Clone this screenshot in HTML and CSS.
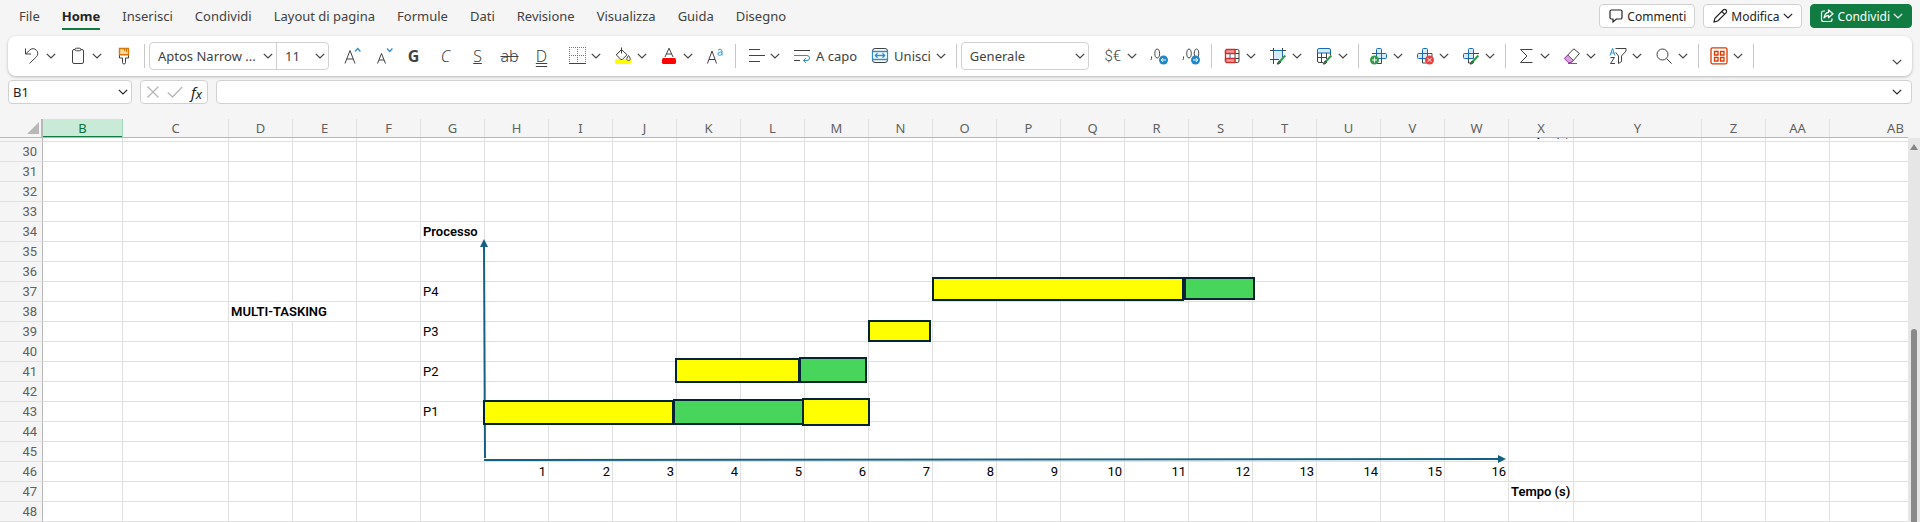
FILE: index.html
```html
<!DOCTYPE html>
<html lang="it">
<head>
<meta charset="utf-8">
<title>Foglio di calcolo</title>
<link rel="stylesheet" href="styles.css">
</head>
<body>
<svg class="defs" aria-hidden="true">
  <symbol id="chev" viewBox="0 0 10 10"><path d="M.8 2.800 5 7l4.200-4.200" fill="none" stroke="currentColor" stroke-width="1.200"/></symbol>
  <symbol id="brush" viewBox="0 0 18 18"><path d="M16.300 8.500 10 15.500" fill="none" stroke="#2f9e4a" stroke-width="2"/><path d="M8 17c1.500 0 3.300-.2 3.600-2-.6-1.200-2-1-2.400 0-.2.800-.5 1.400-1.200 2z" fill="#2f9e4a"/></symbol>
</svg>

<header class="top">
  <nav class="tabs">
    <a href="#">File</a>
    <a href="#" class="active" aria-current="page">Home</a>
    <a href="#">Inserisci</a>
    <a href="#">Condividi</a>
    <a href="#">Layout di pagina</a>
    <a href="#">Formule</a>
    <a href="#">Dati</a>
    <a href="#">Revisione</a>
    <a href="#">Visualizza</a>
    <a href="#">Guida</a>
    <a href="#">Disegno</a>
  </nav>
  <div class="actions">
    <button class="action" type="button"><svg width="16" height="16" viewBox="0 0 16 16" fill="none" stroke="currentColor" stroke-width="1.200"><path d="M3.500 2h9A1.500 1.500 0 0 1 14 3.500v6a1.500 1.500 0 0 1-1.500 1.500H8.300L5 14v-3H3.500A1.500 1.500 0 0 1 2 9.500v-6A1.500 1.500 0 0 1 3.500 2z"/></svg>Commenti</button>
    <button class="action" type="button"><svg width="16" height="16" viewBox="0 0 16 16" fill="none" stroke="currentColor" stroke-width="1.200"><path d="m2 14 .9-3.800 8.300-8.200a1.900 1.900 0 0 1 2.800 2.800L5.800 13 2 14zM9.800 3.500l2.700 2.700"/></svg>Modifica<svg class="chev"><use href="#chev"/></svg></button>
    <button class="action share" type="button"><svg width="16" height="16" viewBox="0 0 16 16" fill="none" stroke="currentColor" stroke-width="1.200"><path d="M6 3H4.500A2 2 0 0 0 2.500 5v6.500a2 2 0 0 0 2 2H11a2 2 0 0 0 2-2V10.500"/><path d="M9.500 2v2.300C6.800 4.600 5.500 6.500 5 10c1.300-1.900 2.600-2.600 4.500-2.700V9.800L14 5.800z" stroke-linejoin="round"/></svg>Condividi<svg class="chev"><use href="#chev"/></svg></button>
  </div>
</header>

<div class="ribbon" role="toolbar" aria-label="Barra multifunzione">
  <button class="tool" type="button" aria-label="Annulla"><svg class="ic" viewBox="0 0 18 18"><path d="M2.500 1.500V7H8M2.800 6.800 6.600 3.200a4.600 4.600 0 0 1 6.800 0 4.600 4.600 0 0 1 0 6.600L6.500 16.500"/></svg><svg class="chev"><use href="#chev"/></svg></button>
  <button class="tool" type="button" aria-label="Incolla"><svg class="ic" viewBox="0 0 18 18"><rect x="3.500" y="2.500" width="11" height="14" rx="1.500"/><rect x="6" y="1.200" width="6" height="2.600" rx="1.300" fill="#fff"/></svg><svg class="chev"><use href="#chev"/></svg></button>
  <button class="tool" type="button" aria-label="Copia formato"><svg class="ic" viewBox="0 0 18 18"><path d="M4.500 7.500V11H7.500v4.500a1.500 1.500 0 0 0 3 0V11h3V7.500"/><path d="M4.500 1.500h9v6.200h-9z" fill="#fbd9a0" stroke="#d97706" stroke-width="1.400"/><path d="M9.500 1.500v2.500M11.500 1.500v3.500" stroke="#d97706"/></svg></button>
  <span class="sep"></span>
  <div class="fontbox">
    <select class="font-name" aria-label="Tipo di carattere"><option>Aptos Narrow ...</option></select>
    <select class="font-size" aria-label="Dimensione carattere"><option>11</option></select>
  </div>
  <button class="tool" type="button" aria-label="Aumenta carattere"><svg class="ic" viewBox="0 0 18 18"><path d="m1 16.500 5-13 5 13M2.700 12h6.600"/><path d="m11 4.500 2.700-3 2.700 3" stroke="#2b8fd0" stroke-width="1.300"/></svg></button>
  <button class="tool" type="button" aria-label="Riduci carattere"><svg class="ic" viewBox="0 0 18 18"><path d="m1.500 16.500 4-10 4 10M3 13h5"/><path d="m11 1.500 2.700 3 2.700-3" stroke="#2b8fd0" stroke-width="1.300"/></svg></button>
  <button class="tool letter bold" type="button" aria-label="Grassetto">G</button>
  <button class="tool letter italic" type="button" aria-label="Corsivo">C</button>
  <button class="tool letter under" type="button" aria-label="Sottolineato">S</button>
  <button class="tool letter strike" type="button" aria-label="Barrato">ab</button>
  <button class="tool letter dunder" type="button" aria-label="Doppia sottolineatura">D</button>
  <button class="tool" type="button" aria-label="Bordi"><svg class="ic" viewBox="0 0 18 18"><path d="M1.500 15V.5M9.500 15V.5M17.500 15V.5M1 .5h17M1 8.500h17" stroke="#777" stroke-dasharray="1 1"/><path d="M1 16.500h17"/></svg><svg class="chev"><use href="#chev"/></svg></button>
  <button class="tool" type="button" aria-label="Colore riempimento"><svg class="ic" viewBox="0 0 18 18"><rect x="1" y="12" width="16" height="5" rx="1.500" fill="#ff0" stroke="none"/><path d="m7.500 2.500-5.200 5.300 4.500 4.700h1.500l4.700-4.700-5.500-5.300zM7.500.5v6M2.300 7.800l2-2"/><path d="M14.500 8.500c-3 4 -1.500 5 0 5s3-1 0-5z" fill="#fff"/></svg><svg class="chev"><use href="#chev"/></svg></button>
  <button class="tool" type="button" aria-label="Colore carattere"><svg class="ic" viewBox="0 0 18 18"><rect x="2" y="11" width="14" height="6" rx="1.500" fill="#f00" stroke="none"/><path d="m5 10 4-8.800L13 10M6.500 7h5"/></svg><svg class="chev"><use href="#chev"/></svg></button>
  <button class="tool" type="button" aria-label="Maiuscole e minuscole"><svg class="ic" viewBox="0 0 18 18"><path d="M1.500 16.500 6 4l4.500 12.500M3 12.500h6"/><path d="M12 3.200c1-1.500 4-1.200 4 1V8.500M16 5c-2.500 0-4 .4-4 1.900 0 2 3.200 1.800 4-.2" stroke="#2b8fd0"/></svg></button>
  <span class="sep"></span>
  <button class="tool" type="button" aria-label="Allineamento"><svg class="ic" viewBox="0 0 18 18"><path d="M2 2.500h11M2 8.500h16M2 14.500h11"/></svg><svg class="chev"><use href="#chev"/></svg></button>
  <button class="tool" type="button"><svg class="ic" viewBox="0 0 18 18"><path d="M1 3.500h16M1 13.500h6"/><path d="M1 8.500h13a2.500 2.500 0 0 1 0 5h-3.500M13 11l-2.500 2.500L13 16" stroke="#2b8fd0"/></svg>A capo</button>
  <button class="tool" type="button"><svg class="ic" viewBox="0 0 18 18"><rect x="1.500" y="1.500" width="15" height="14" rx="2.500"/><path d="M1.500 4.500h15v8h-15zM4.500 8.500h9M6.500 6.200 4.300 8.500l2.200 2.300M11.500 6.200l2.200 2.300-2.200 2.300" stroke="#2b8fd0" stroke-width="1.300"/></svg>Unisci<svg class="chev"><use href="#chev"/></svg></button>
  <span class="sep"></span>
  <select class="format" aria-label="Formato numero"><option>Generale</option></select>
  <button class="tool" type="button" aria-label="Formato valuta"><span class="money">$€</span><svg class="chev"><use href="#chev"/></svg></button>
  <button class="tool" type="button" aria-label="Aumenta decimali"><svg class="ic" viewBox="0 0 18 18"><path d="M1.500 9.500v2L.8 13M7.200 2c3.200 0 3.200 9 0 9s-3.200-9 0-9z"/><circle cx="13.500" cy="13" r="4.500" fill="#1f86cc" stroke="none"/><path d="M16 13h-4.500M13.200 11l-2 2 2 2" stroke="#fff"/></svg></button>
  <button class="tool" type="button" aria-label="Riduci decimali"><svg class="ic" viewBox="0 0 18 18"><path d="M1.500 9.500v2L.8 13M7 2c3 0 3 9 0 9s-3-9 0-9zM14.500 2c3 0 3 9 0 9s-3-9 0-9z"/><circle cx="13.500" cy="13" r="4.500" fill="#1f86cc" stroke="none"/><path d="M11 13h4.500M13.800 11l2 2-2 2" stroke="#fff"/></svg></button>
  <span class="sep"></span>
  <button class="tool" type="button" aria-label="Formattazione condizionale"><svg class="ic" viewBox="0 0 18 18"><path d="M12 2.500h2.500A1.500 1.500 0 0 1 16 4v10a1.500 1.500 0 0 1-1.500 1.500H12M12 2.500v13M7 6.500h9M7 11.500h9"/><path d="M7 6.500v5" stroke="#1769b5"/><path d="M3.500 2.500H12v4H2.500v-3zM2.500 11.500H12v4H3.500l-1-1z" fill="#fb9aa0" stroke="#d0302b" stroke-width="1.300"/><path d="M2.500 3.500v11" stroke="#d0302b" stroke-width="1.300"/></svg><svg class="chev"><use href="#chev"/></svg></button>
  <button class="tool" type="button" aria-label="Formatta come tabella"><svg class="ic" viewBox="0 0 18 18"><path d="M4.500 3.500h9v9h-9z" fill="#d6eafa" stroke="none"/><path d="M4.500 1v16M1 12.500h8"/><path d="M13.500 1v9M1 3.500h16M4.500 3.500v9H10"/><path d="M4.500 3.500h9v6M4.500 3.500v9" stroke="#1769b5"/><use href="#brush" width="18" height="18"/></svg><svg class="chev"><use href="#chev"/></svg></button>
  <button class="tool" type="button" aria-label="Stili cella"><svg class="ic" viewBox="0 0 18 18"><path d="M2.500 6v8a1.500 1.500 0 0 0 1.500 1.500h4M6.500 6v9.500M11.500 6v6M2.500 10.500h9M15.500 6v2"/><path d="M4 1.500h10a1.500 1.500 0 0 1 1.500 1.500v3h-13V3A1.500 1.500 0 0 1 4 1.500z" fill="#d6eafa" stroke="#1769b5"/><use href="#brush" width="18" height="18"/></svg><svg class="chev"><use href="#chev"/></svg></button>
  <span class="sep"></span>
  <button class="tool" type="button" aria-label="Inserisci celle"><svg class="ic" viewBox="0 0 18 18"><path d="M2 6.500h4M6.500 12v4.500h5V12"/><path d="M6.500 2.500a1 1 0 0 1 1-1h3a1 1 0 0 1 1 1v4h4a1 1 0 0 1 1 1v3a1 1 0 0 1-1 1h-9z" fill="#d6eafa" stroke="#1769b5"/><path d="M6.500 6.500h5v5" stroke="#1769b5"/><circle cx="4.500" cy="13" r="4.500" fill="#2f9e4a" stroke="none"/><path d="M2 13h5M4.500 10.500v5" stroke="#fff"/></svg><svg class="chev"><use href="#chev"/></svg></button>
  <button class="tool" type="button" aria-label="Elimina celle"><svg class="ic" viewBox="0 0 18 18"><path d="M12 6.500h4v4M6.500 11.500v4.500h4"/><path d="M6.500 2.500a1 1 0 0 1 1-1h3a1 1 0 0 1 1 1v9h-9a1 1 0 0 1-1-1v-3a1 1 0 0 1 1-1h4z" fill="#d6eafa" stroke="#1769b5"/><path d="M6.500 6.500h9M6.500 6.500v5" stroke="#1769b5"/><circle cx="13.500" cy="13" r="4.500" fill="#e5403f" stroke="none"/><path d="m11.700 11.200 3.600 3.600M15.300 11.200l-3.600 3.600" stroke="#fff"/></svg><svg class="chev"><use href="#chev"/></svg></button>
  <button class="tool" type="button" aria-label="Formato celle"><svg class="ic" viewBox="0 0 18 18"><path d="M12 6.500h5M6.500 11.500v4.500h3"/><path d="M6.500 2.500a1 1 0 0 1 1-1h3a1 1 0 0 1 1 1v9h-9a1 1 0 0 1-1-1v-3a1 1 0 0 1 1-1h4z" fill="#d6eafa" stroke="#1769b5"/><path d="M6.500 6.500h5M6.500 6.500v5" stroke="#1769b5"/><use href="#brush" width="18" height="18"/></svg><svg class="chev"><use href="#chev"/></svg></button>
  <span class="sep"></span>
  <button class="tool" type="button" aria-label="Somma automatica"><svg class="ic" viewBox="0 0 18 18"><path d="M15.500 2.500h-12L10 9l-6.500 6.500h12"/></svg><svg class="chev"><use href="#chev"/></svg></button>
  <button class="tool" type="button" aria-label="Cancella"><svg class="ic" viewBox="0 0 18 18"><path d="m10.800 1.800 5.600 4.700-7.400 8.500H5.500L1.800 11z"/><path d="m5 8 5.200 5.200-2 2.300H5.300L1.500 11.700z" fill="#dca0e0" stroke="#9b3fa8"/><path d="M5 16.500h9" stroke="#9b3fa8"/></svg><svg class="chev"><use href="#chev"/></svg></button>
  <button class="tool" type="button" aria-label="Ordina e filtra"><svg class="ic" viewBox="0 0 18 18"><path d="M1 8.500 3.500 1.500 6 8.500M2 6h3" stroke="#2b8fd0"/><path d="M1.500 10.500h4l-4 6h4.500"/><path d="M6.500 1.500H17v2.500l-4.500 5v5.500l-3 2V9L6.800 5.500"/></svg><svg class="chev"><use href="#chev"/></svg></button>
  <button class="tool" type="button" aria-label="Trova e seleziona"><svg class="ic" viewBox="0 0 18 18"><circle cx="7.500" cy="7.500" r="5.500"/><path d="m11.500 11.500 5 5"/></svg><svg class="chev"><use href="#chev"/></svg></button>
  <span class="sep"></span>
  <button class="tool" type="button" aria-label="Componenti aggiuntivi"><svg class="ic addin" viewBox="0 0 18 18"><rect x="1" y=".8" width="16" height="16" rx="1.500"/><path d="M4.500 4.500h3.500V8H4.500zM10.500 4.500H14V8h-3.500zM4.500 10.500h3.500V14H4.500zM10.500 10.500H14V14h-3.500z"/></svg><svg class="chev"><use href="#chev"/></svg></button>
  <span class="sep"></span>
  <button class="tool more" type="button" aria-label="Opzioni barra"><svg class="chev"><use href="#chev"/></svg></button>
</div>

<div class="formula-row">
  <div class="field name-box">
    <input type="text" value="B1" aria-label="Casella del nome">
    <button type="button" aria-label="Elenco nomi"><svg class="chev"><use href="#chev"/></svg></button>
  </div>
  <div class="field fx">
    <button type="button" aria-label="Annulla modifica"><svg width="14" height="14" viewBox="0 0 14 14"><path d="m1.500 1.500 11 11M12.500 1.500l-11 11" stroke="#b8b8b8" stroke-width="1.400" fill="none"/></svg></button>
    <button type="button" aria-label="Conferma"><svg width="16" height="14" viewBox="0 0 16 14"><path d="M.8 7.500 5.500 12 15.200 2" stroke="#b8b8b8" stroke-width="1.400" fill="none"/></svg></button>
    <button type="button" class="fn" aria-label="Inserisci funzione">f<small>x</small></button>
  </div>
  <div class="field formula">
    <input type="text" value="" aria-label="Barra della formula">
    <button type="button" aria-label="Espandi"><svg class="chev"><use href="#chev"/></svg></button>
  </div>
</div>

<main class="sheet">
  <div class="columns"><table class="grid head" id="head" aria-label="Colonne"></table></div>
  <div class="pane">
    <div class="cells">
      <div class="canvas">
        <table class="grid" id="body" aria-label="Foglio"></table>
        <svg class="chart" width="1077" height="300" viewBox="480 222 1077 300" role="img" aria-label="Diagramma multi-tasking">
          <g stroke="#156082" stroke-width="2"><path d="M484 246 485 458"/><path d="M484 460 1500 459"/></g>
          <path d="M484 239l4 8h-8zM1506 459l-8-4v8z" fill="#156082"/>
          <g stroke="#042433" stroke-width="2">
            <rect x="1185" y="278" width="69" height="21" fill="#47d65b"/>
            <rect x="933" y="278" width="250" height="22" fill="#ff0"/>
            <rect x="869" y="321" width="61" height="20" fill="#ff0"/>
            <rect x="676" y="359" width="123" height="23" fill="#ff0"/>
            <rect x="800" y="358" width="66" height="24" fill="#47d65b"/>
            <rect x="484" y="401" width="189" height="23" fill="#ff0"/>
            <rect x="674" y="400" width="129" height="24" fill="#47d65b"/>
            <rect x="803" y="399" width="66" height="26" fill="#ff0"/>
          </g>
        </svg>
      </div>
    </div>
    <div class="scrollbar"><svg width="8" height="6" viewBox="0 0 8 6"><path d="M4 0 8 6H0z" fill="#858585"/></svg><span class="thumb"></span></div>
  </div>
</main>
<script src="sheet.js"></script>
</body>
</html>
```

FILE: styles.css
```css
* { box-sizing: border-box; }
body {
  margin: 0;
  height: 100vh;
  display: flex;
  flex-direction: column;
  overflow: hidden;
  background: #f5f5f5;
  color: #242424;
  font-family: "Noto Sans", "Open Sans", sans-serif;
  font-size: 13px;
}
button, input, select { font: inherit; color: inherit; margin: 0; }
button { background: none; border: 0; padding: 0; }
.defs { display: none; }
.chev { width: 10px; height: 10px; flex: none; }

.top {
  display: flex;
  justify-content: space-between;
  align-items: flex-start;
  height: 36px;
  flex: none;
  padding: 4px 8px 0 19px;
}
.tabs { display: flex; gap: 22px; }
.tabs a {
  color: #424242;
  text-decoration: none;
  line-height: 24px;
  height: 26px;
  white-space: nowrap;
}
.tabs .active { color: #242424; font-weight: 700; border-bottom: 2px solid #107c41; }
.actions { display: flex; gap: 8px; }
.action {
  display: flex;
  align-items: center;
  gap: 3px;
  height: 24px;
  padding: 0 8px;
  font-size: 12px;
  background: #fff;
  border: 1px solid #d1d1d1;
  border-radius: 4px;
}
.share { background: #107c41; border-color: #107c41; color: #fff; }

.ribbon {
  display: flex;
  align-items: center;
  height: 40px;
  flex: none;
  margin: 0 8px;
  padding-left: 8px;
  background: #fff;
  border-radius: 8px;
  box-shadow: 0 1px 3px rgba(0, 0, 0, .25);
  color: #424242;
}
.tool {
  display: flex;
  align-items: center;
  gap: 5px;
  height: 32px;
  padding: 0 6px 0 7px;
  flex: none;
  white-space: nowrap;
}
.tool:not(:has(.chev)) { padding-right: 7px; }
.ic { width: 18px; height: 18px; fill: none; stroke: #424242; stroke-width: 1; }
.addin { stroke: #d83b01; stroke-width: 1.3; }
.letter { width: 32px; justify-content: center; padding: 0; font-size: 16px; font-weight: 300; line-height: 20px; }
.bold { font-weight: 700; }
.italic { font-style: italic; }
.under { text-decoration: underline; }
.strike { text-decoration: line-through; }
.dunder { text-decoration: underline double; }
.money { width: 18px; font-family: Roboto, sans-serif; font-size: 15px; font-weight: 300; }
.sep { width: 1px; height: 24px; margin: 0 4px; background: #c8c8c8; flex: none; }
.fontbox { display: flex; height: 28px; margin-right: 8px; border: 1px solid #d1d1d1; border-radius: 4px; }
select {
  appearance: none;
  border: 0;
  padding: 0 20px 0 8px;
  background: url("data:image/svg+xml,%3Csvg xmlns='http://www.w3.org/2000/svg' width='10' height='10'%3E%3Cpath d='M.8 2.800 5 7l4.200-4.200' fill='none' stroke='%23424242' stroke-width='1.200'/%3E%3C/svg%3E") no-repeat right 3px center;
}
.font-name { width: 127px; border-right: 1px solid #d1d1d1; }
.font-size { width: 51px; }
.format { width: 128px; height: 28px; margin-right: 8px; border: 1px solid #d1d1d1; border-radius: 4px; }
.more { margin-left: auto; padding: 12px 10px 0 0; }

.formula-row { display: flex; gap: 8px; padding: 4px 8px; flex: none; }
.field {
  display: flex;
  align-items: center;
  height: 24px;
  background: #fff;
  border: 1px solid #d1d1d1;
  border-radius: 4px;
}
.field input { flex: 1; min-width: 0; height: 20px; border: 0; background: none; padding: 0 4px; font-size: 13px; }
.field button { display: flex; align-items: center; }
.name-box { width: 124px; padding-right: 3px; }
.fx { width: 68px; justify-content: space-between; padding: 0 5px; }
.fx .fn { font-style: italic; font-size: 15px; line-height: 20px; }
.fn small { font-size: 13px; padding-top: 4px; }
.formula { flex: 1; padding-right: 9px; }

.sheet { flex: 1; min-height: 0; display: flex; flex-direction: column; overflow: hidden; }
.columns { flex: none; overflow: hidden; margin-right: 12px; border-bottom: 1px solid #b8b8b8; }
.grid { table-layout: fixed; border-collapse: separate; border-spacing: 0; width: 1962px; }
.grid th { padding: 0; font-weight: 400; color: #616161; }
.head th { height: 18px; line-height: 18px; border-right: 1px solid #e0e0e0; }
.head tr { height: 18px; }
.head { border-top: 11px solid #f5f5f5; }
.head .corner { text-align: right; border-right: 2px solid #b8b8b8; box-shadow: 0 -11px 0 #f5f5f5, 0 -11px 0 #b8b8b8; }
.corner svg { display: block; margin-left: auto; margin-right: 2px; }
.head .selected { background: #caead8; color: #0e703a; border-right-color: #a0d8b9; box-shadow: inset 0 -1px 0 #107c41, 0 1px 0 #107c41; }
.pane { flex: 1; min-height: 0; display: flex; }
.cells { flex: 1; min-width: 0; overflow: hidden; background: #fff; }
.canvas { position: relative; width: 1962px; margin-top: -16px; }
#body tr { height: 20px; }
#body th {
  font-family: Roboto, sans-serif;
  background: #f5f5f5;
  text-align: right;
  line-height: 18px;
  padding: 1px 5px 0 0;
  border-right: 1px solid #b8b8b8;
  border-bottom: 1px solid #e0e0e0;
}
#body td {
  height: 20px;
  padding: 1px 2px 0;
  line-height: 18px;
  color: #000;
  font-family: Roboto, sans-serif;
  white-space: nowrap;
  border-right: 1px solid #e0e0e0;
  border-bottom: 1px solid #e0e0e0;
}
#body .num { text-align: right; }
#body .strong { font-weight: 600; }
.chart { position: absolute; left: 480px; top: 100px; }
.scrollbar { width: 12px; display: flex; flex-direction: column; align-items: center; background: #e6e6e6; padding-top: 6px; }
.thumb { width: 6px; flex: 1; margin-top: 179px; border-radius: 3px 3px 0 0; background: #8a8a8a; }
```

FILE: sheet.js
```js
const columns = [["B", 80], ["C", 106]];
for (const name of "DEFGHIJKLMNOPQRSTUVW") columns.push([name, 64]);
columns.push(["X", 65], ["Y", 128], ["Z", 64], ["AA", 64], ["AB", 132]);

const cells = {
  G34: "Processo", G37: "P4", G39: "P3", G41: "P2", G43: "P1",
  D38: "MULTI-TASKING", X29: "Tempo (s)", X47: "Tempo (s)"
};
const strong = ["G34", "D38", "X29", "X47"];
[..."HIJKLMNOPQRSTUVW"].forEach((name, i) => { cells[name + 46] = i + 1; });

const colgroup = "<colgroup><col style=\"width:43px\">" +
  columns.map(([, w]) => `<col style="width:${w}px">`).join("") + "</colgroup>";

document.getElementById("head").innerHTML = colgroup +
  "<thead><tr><th class=\"corner\"><svg width=\"12\" height=\"12\" viewBox=\"0 0 12 12\"><path d=\"M12 0v12H0z\" fill=\"#b8b8b8\"/></svg></th>" +
  columns.map(([name]) => `<th scope="col"${name === "B" ? " class=\"selected\"" : ""}>${name}</th>`).join("") +
  "</tr></thead>";

let rows = "";
for (let r = 29; r <= 48; r++) {
  rows += `<tr><th scope="row">${r}</th>`;
  for (let c = 0; c < columns.length; c++) {
    const ref = columns[c][0] + r;
    const value = cells[ref] ?? "";
    const cls = [typeof value === "number" && "num", strong.includes(ref) && "strong"].filter(Boolean).join(" ");
    // A long label spills over the empty cell on its right.
    const wide = ref === "D38";
    rows += `<td${cls ? ` class="${cls}"` : ""}${wide ? " colspan=\"2\"" : ""}>${value}</td>`;
    if (wide) c++;
  }
  rows += "</tr>";
}
document.getElementById("body").innerHTML = colgroup + "<tbody>" + rows + "</tbody>";
```
